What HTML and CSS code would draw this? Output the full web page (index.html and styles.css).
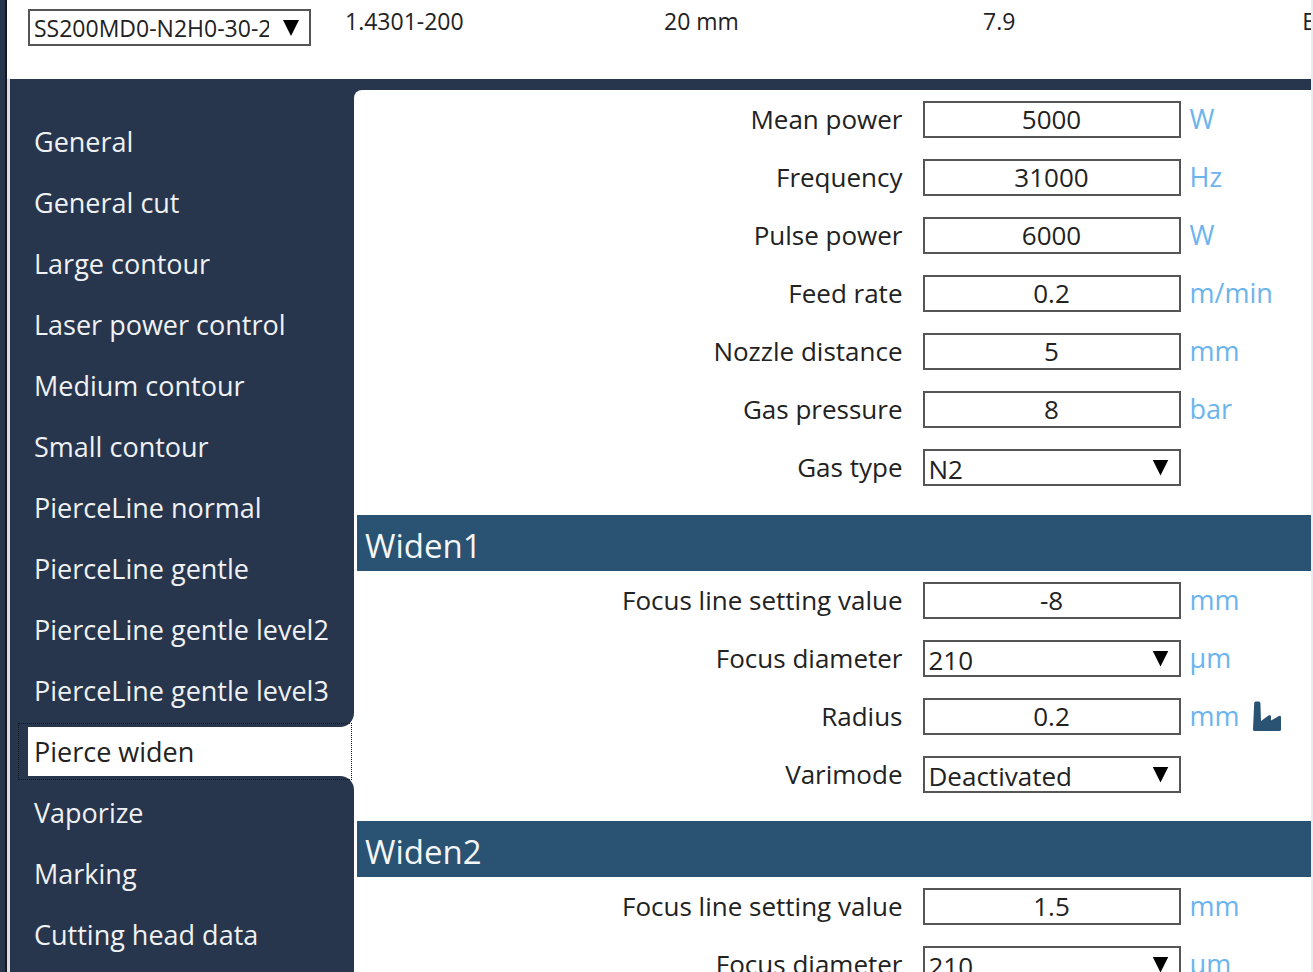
FILE: index.html
```html
<!DOCTYPE html>
<html lang="en">
<head>
<meta charset="utf-8">
<title>Pierce widen</title>
<link rel="stylesheet" href="styles.css">
</head>
<body>
<div class="window">
  <header class="summary">
    <div class="select select-table">
      <select aria-label="Technology table"><option>SS200MD0-N2H0-30-2</option></select>
    </div>
    <span class="summary-value">1.4301-200</span>
    <span class="summary-value">20 mm</span>
    <span class="summary-value">7.9</span>
    <span class="summary-value">E</span>
  </header>
  <div class="workspace">
    <nav class="tabs" aria-label="Parameter groups">
      <div class="tab-group tab-group-before">
        <button class="tab">General</button>
        <button class="tab">General cut</button>
        <button class="tab">Large contour</button>
        <button class="tab">Laser power control</button>
        <button class="tab">Medium contour</button>
        <button class="tab">Small contour</button>
        <button class="tab">PierceLine normal</button>
        <button class="tab">PierceLine gentle</button>
        <button class="tab">PierceLine gentle level2</button>
        <button class="tab">PierceLine gentle level3</button>
      </div>
      <div class="tab-current">
        <button class="tab tab-active" aria-current="true">Pierce widen</button>
      </div>
      <div class="tab-group tab-group-after">
        <button class="tab">Vaporize</button>
        <button class="tab">Marking</button>
        <button class="tab">Cutting head data</button>
      </div>
    </nav>
    <main class="panel">
      <section class="section">
        <div class="row"><label for="mean">Mean power</label><input id="mean" type="text" value="5000"><span class="unit">W</span></div>
        <div class="row"><label for="freq">Frequency</label><input id="freq" type="text" value="31000"><span class="unit">Hz</span></div>
        <div class="row"><label for="pulse">Pulse power</label><input id="pulse" type="text" value="6000"><span class="unit">W</span></div>
        <div class="row"><label for="feed">Feed rate</label><input id="feed" type="text" value="0.2"><span class="unit">m/min</span></div>
        <div class="row"><label for="nozzle">Nozzle distance</label><input id="nozzle" type="text" value="5"><span class="unit">mm</span></div>
        <div class="row"><label for="pressure">Gas pressure</label><input id="pressure" type="text" value="8"><span class="unit">bar</span></div>
        <div class="row"><label for="gas">Gas type</label><div class="select"><select id="gas"><option>N2</option></select></div></div>
      </section>
      <h2 class="heading">Widen1</h2>
      <section class="section">
        <div class="row"><label for="focus1">Focus line setting value</label><input id="focus1" type="text" value="-8"><span class="unit">mm</span></div>
        <div class="row"><label for="diam1">Focus diameter</label><div class="select"><select id="diam1"><option>210</option></select></div><span class="unit">µm</span></div>
        <div class="row"><label for="radius">Radius</label><input id="radius" type="text" value="0.2"><span class="unit">mm
          <svg class="factory" viewBox="0 0 28 30" aria-hidden="true"><path d="M0 28.5 1.2 2Q1.3.5 2.8.5H5.8Q7.3.5 7.4 2L8 20 15.5 14.5Q17.5 13 18 15.5V19.5L26 15Q28 14 28 16.5V28.5Q28 30 26.5 30H1.5Q0 30 0 28.5Z"/></svg></span></div>
        <div class="row"><label for="vari">Varimode</label><div class="select"><select id="vari"><option>Deactivated</option></select></div></div>
      </section>
      <h2 class="heading">Widen2</h2>
      <section class="section">
        <div class="row"><label for="focus2">Focus line setting value</label><input id="focus2" type="text" value="1.5"><span class="unit">mm</span></div>
        <div class="row"><label for="diam2">Focus diameter</label><div class="select"><select id="diam2"><option>210</option></select></div><span class="unit">µm</span></div>
      </section>
    </main>
  </div>
</div>
</body>
</html>
```
FILE: styles.css
```css
:root {
  --navy: #27364d;
  --blue: #2a5272;
  --unit: #6cb4ee;
  --ink: #222;
}

* {
  box-sizing: border-box;
}

body {
  margin: 0;
  height: 100vh;
  overflow: hidden;
  background: #ebebf0;
  border-left: 5px solid var(--navy);
  padding-right: 2px;
  font-family: "Open Sans", "Noto Sans", sans-serif;
  font-size: 27px;
  line-height: 36px;
  color: var(--ink);
}

button,
input,
select {
  font: inherit;
  color: inherit;
  margin: 0;
}

.window {
  display: flex;
  flex-direction: column;
  height: 100%;
  overflow: hidden;
  border-left: 2px solid #15181e;
  background: #fff;
}

.summary {
  flex: none;
  display: grid;
  grid-template-columns: 317px repeat(3, minmax(0, 36fr)) minmax(0, 1fr);
  align-items: start;
  height: 79px;
  padding: 9px 0 0 21px;
  font-size: 23px;
  line-height: 24px;
}

.summary-value {
  white-space: nowrap;
}

.workspace {
  flex: 1;
  min-height: 0;
  display: flex;
  border-left: 3px solid #dcdee2;
}

.tabs {
  flex: none;
  width: 344px;
  display: flex;
  flex-direction: column;
}

.tab-group {
  display: flex;
  flex-direction: column;
  background: var(--navy);
  padding-left: 18px;
}

.tab-group-before {
  padding-top: 32px;
  padding-bottom: 6px;
  border-bottom-right-radius: 14px;
}

.tab-group-after {
  flex: 1;
  padding-top: 6px;
  border-top-right-radius: 14px;
}

.tab {
  flex: none;
  height: 61px;
  padding: 0 0 0 6px;
  border: 0;
  background: none;
  color: #f0f1f3;
  text-align: left;
  white-space: nowrap;
}

.tab-current {
  flex: none;
  display: flex;
  position: relative;
  border-left: 18px solid var(--navy);
}

.tab-current::after {
  content: "";
  position: absolute;
  inset: -4px 2px -4px -10px;
  border: 1px dotted #111722;
  pointer-events: none;
}

.tab-active {
  flex: 1;
  height: 49px;
  background: #fff;
  color: var(--ink);
}

.panel {
  flex: 1;
  min-width: 0;
  overflow: hidden;
  border-top: 11px solid var(--navy);
  background: linear-gradient(var(--navy), var(--navy)) 0 0 / 8px 8px no-repeat;
  font-size: 26px;
}

.section {
  padding: 0 0 18px 3px;
  background: #fff;
}

.section:first-child {
  padding-bottom: 19px;
  border-top-left-radius: 8px;
}

.row {
  display: grid;
  grid-template-columns: minmax(0, 13fr) 258px minmax(0, 3fr);
  align-items: center;
  height: 58px;
}

.row label {
  padding-right: 20px;
  text-align: right;
  white-space: nowrap;
}

.row input,
.select select {
  display: block;
  width: 100%;
  height: 37px;
  border: 2px solid #555;
  border-radius: 0;
  background: #fff;
  text-align: center;
}

.row input {
  padding: 0;
}

.select {
  position: relative;
}

.select select {
  appearance: none;
  padding: 0 40px 0 4px;
  text-align: left;
}

.select::after {
  content: "";
  position: absolute;
  right: 12px;
  top: 11px;
  width: 16px;
  height: 16px;
  background: #000;
  clip-path: polygon(0 0, 100% 0, 50% 100%);
  pointer-events: none;
}

.select-table {
  width: 283px;
}

.unit {
  display: flex;
  align-items: center;
  gap: 13px;
  padding-left: 9px;
  font-size: 27px;
  color: var(--unit);
}

.factory {
  width: 28px;
  height: 30px;
  fill: var(--blue);
}

.heading {
  margin: 0 0 0 3px;
  padding: 4px 0 0 8px;
  height: 56px;
  background: var(--blue);
  color: #f4f6f8;
  font-size: 33px;
  font-weight: 400;
  line-height: 54px;
}
```
